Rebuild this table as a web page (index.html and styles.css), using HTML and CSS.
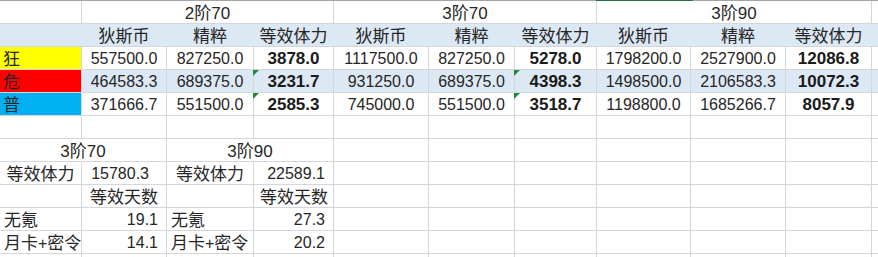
FILE: index.html
```html
<!DOCTYPE html>
<html lang="zh">
<head>
<meta charset="utf-8">
<title>Sheet</title>
<link rel="stylesheet" href="styles.css">
</head>
<body>
<div class="sheet">
  <div class="sel"></div>
  <!-- row 1 -->
  <div class="c"></div>
  <div class="c zh span3">2阶70</div>
  <div class="c zh span3">3阶70</div>
  <div class="c zh span3">3阶90</div>
  <div class="c"></div>
  <!-- row 2 -->
  <div class="c hdr"></div>
  <div class="c hdr zh">狄斯币</div>
  <div class="c hdr zh">精粹</div>
  <div class="c hdr zh">等效体力</div>
  <div class="c hdr zh">狄斯币</div>
  <div class="c hdr zh">精粹</div>
  <div class="c hdr zh">等效体力</div>
  <div class="c hdr zh">狄斯币</div>
  <div class="c hdr zh">精粹</div>
  <div class="c hdr zh">等效体力</div>
  <div class="c hdr"></div>
  <!-- row 3 -->
  <div class="c zh lbl yellow">狂</div>
  <div class="c num">557500.0</div>
  <div class="c num">827250.0</div>
  <div class="c num b">3878.0</div>
  <div class="c num">1117500.0</div>
  <div class="c num">827250.0</div>
  <div class="c num b">5278.0</div>
  <div class="c num">1798200.0</div>
  <div class="c num">2527900.0</div>
  <div class="c num b">12086.8</div>
  <div class="c"></div>
  <!-- row 4 -->
  <div class="c zh lbl red">危</div>
  <div class="c num band">464583.3</div>
  <div class="c num band">689375.0</div>
  <div class="c num b band"><span class="tri"></span>3231.7</div>
  <div class="c num band">931250.0</div>
  <div class="c num band">689375.0</div>
  <div class="c num b band"><span class="tri"></span>4398.3</div>
  <div class="c num band">1498500.0</div>
  <div class="c num band">2106583.3</div>
  <div class="c num b band">10072.3</div>
  <div class="c band"></div>
  <!-- row 5 -->
  <div class="c zh lbl cyan">普</div>
  <div class="c num">371666.7</div>
  <div class="c num">551500.0</div>
  <div class="c num b"><span class="tri"></span>2585.3</div>
  <div class="c num">745000.0</div>
  <div class="c num">551500.0</div>
  <div class="c num b"><span class="tri"></span>3518.7</div>
  <div class="c num">1198800.0</div>
  <div class="c num">1685266.7</div>
  <div class="c num b">8057.9</div>
  <div class="c"></div>
  <!-- row 6 -->
  <div class="c"></div><div class="c"></div><div class="c"></div><div class="c"></div>
  <div class="c"></div><div class="c"></div><div class="c"></div><div class="c"></div>
  <div class="c"></div><div class="c"></div><div class="c"></div>
  <!-- row 7 -->
  <div class="c zh span2">3阶70</div>
  <div class="c zh span2">3阶90</div>
  <div class="c"></div><div class="c"></div><div class="c"></div><div class="c"></div>
  <div class="c"></div><div class="c"></div><div class="c"></div>
  <!-- row 8 -->
  <div class="c zh">等效体力</div>
  <div class="c num r r17">15780.3</div>
  <div class="c zh">等效体力</div>
  <div class="c num r">22589.1</div>
  <div class="c"></div><div class="c"></div><div class="c"></div><div class="c"></div>
  <div class="c"></div><div class="c"></div><div class="c"></div>
  <!-- row 9 -->
  <div class="c"></div>
  <div class="c zh r">等效天数</div>
  <div class="c"></div>
  <div class="c zh r r5">等效天数</div>
  <div class="c"></div><div class="c"></div><div class="c"></div><div class="c"></div>
  <div class="c"></div><div class="c"></div><div class="c"></div>
  <!-- row 10 -->
  <div class="c zh lbl">无氪</div>
  <div class="c num r">19.1</div>
  <div class="c zh lbl">无氪</div>
  <div class="c num r">27.3</div>
  <div class="c"></div><div class="c"></div><div class="c"></div><div class="c"></div>
  <div class="c"></div><div class="c"></div><div class="c"></div>
  <!-- row 11 -->
  <div class="c zh lbl">月卡<span class="plus">+</span>密令</div>
  <div class="c num r">14.1</div>
  <div class="c zh lbl">月卡<span class="plus">+</span>密令</div>
  <div class="c num r">20.2</div>
  <div class="c"></div><div class="c"></div><div class="c"></div><div class="c"></div>
  <div class="c"></div><div class="c"></div><div class="c"></div>
  <!-- row 12 -->
  <div class="c"></div><div class="c"></div><div class="c"></div><div class="c"></div>
  <div class="c"></div><div class="c"></div><div class="c"></div><div class="c"></div>
  <div class="c"></div><div class="c"></div><div class="c"></div>
</div>
</body>
</html>
```
FILE: styles.css
```css
html, body {
  margin: 0;
  padding: 0;
  background: #ffffff;
  overflow: hidden;
}

.sheet {
  position: relative;
  display: grid;
  grid-template-columns: 81px 84px 86px 79px 94px 85px 81px 93px 94px 85px 20px;
  grid-auto-rows: 22px;
  gap: 1px;
  width: max-content;
  background: #d3d6da;
  border-top: 1px solid #a4a4a4;
  font-family: "Liberation Sans", "Noto Sans CJK SC", sans-serif;
  color: #262626;
}

.sel {
  position: absolute;
  top: -1px;
  left: 596px;
  width: 97px;
  height: 1px;
  background: #217346;
  z-index: 2;
}

.c {
  position: relative;
  display: flex;
  align-items: flex-end;
  justify-content: center;
  background: #ffffff;
  font-size: 16px;
  line-height: 20px;
  white-space: nowrap;
  overflow: hidden;
}

.zh {
  font-size: 17px;
  line-height: 18px;
}

.num {
  font-size: 16px;
}

.b {
  font-weight: bold;
  font-size: 17px;
  color: #1a1a1a;
  overflow: visible;
}

.span3 { grid-column: span 3; }
.span2 { grid-column: span 2; }

.hdr {
  background: #dde8f5;
  box-shadow: 1px 0 0 #dde8f5;
}

.band {
  background: #dde8f5;
}

.lbl {
  justify-content: flex-start;
  padding-left: 4px;
}

.yellow { background: #ffff00; padding-left: 3px; }
.red { background: #ff0000; padding-left: 3px; }
.cyan { background: #00b0f0; padding-left: 3px; }

.r {
  justify-content: flex-end;
  padding-right: 8px;
}

.r17 { padding-right: 17px; }
.r5 { padding-right: 5px; }

.plus {
  font-family: "Liberation Sans", sans-serif;
  font-size: 16px;
}

.tri {
  position: absolute;
  left: -1px;
  top: 0;
  width: 0;
  height: 0;
  border-top: 6px solid #1f8a3a;
  border-right: 6px solid transparent;
}
```
